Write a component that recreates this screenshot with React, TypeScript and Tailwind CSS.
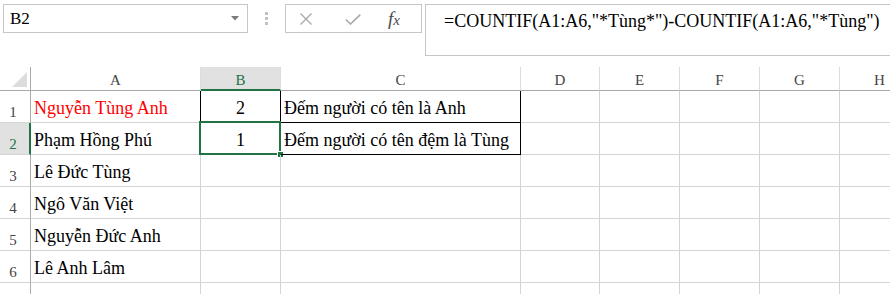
import React from 'react'

type Row = {
  n: number
  a?: string
  red?: boolean
  b?: string
  c?: string
}

const rows: Row[] = [
  { n: 1, a: 'Nguyễn Tùng Anh', red: true, b: '2', c: 'Đếm người có tên là Anh' },
  { n: 2, a: 'Phạm Hồng Phú', b: '1', c: 'Đếm người có tên đệm là Tùng' },
  { n: 3, a: 'Lê Đức Tùng' },
  { n: 4, a: 'Ngô Văn Việt' },
  { n: 5, a: 'Nguyễn Đức Anh' },
  { n: 6, a: 'Lê Anh Lâm' },
  { n: 7 },
]

const cols = ['A', 'B', 'C', 'D', 'E', 'F', 'G', 'H']

function FormulaBar() {
  return (
    <div className="flex items-start h-[67px] pt-[4px] pl-[3px]">
      <div className="w-[245px] h-[29px] border border-[#c6c6c6] flex items-center pl-[6px] pr-[8px]">
        <span className="text-[17px] leading-[20px] text-black flex-1">B2</span>
        <svg width="8" height="5" viewBox="0 0 8 5">
          <path d="M0 0 L8 0 L4 4.5 Z" fill="#7a7a7a" />
        </svg>
      </div>
      <div className="w-[37px] pl-[17px] pt-[8px] flex flex-col gap-[2px]">
        <div className="w-[3px] h-[3px] bg-[#c2c2c2]" />
        <div className="w-[3px] h-[3px] bg-[#c2c2c2]" />
        <div className="w-[3px] h-[3px] bg-[#c2c2c2]" />
      </div>
      <div className="w-[137px] h-[29px] border border-[#c6c6c6] flex items-center">
        <svg className="ml-[14px]" width="12" height="12" viewBox="0 0 12 12">
          <path d="M0.5 0.5 L11.5 11.5 M11.5 0.5 L0.5 11.5" stroke="#a8a8a8" strokeWidth="1.3" fill="none" />
        </svg>
        <svg className="ml-[33px] mt-[2px]" width="16" height="11" viewBox="0 0 16 11">
          <path d="M0.8 5.5 L5.5 10 L15.3 0.6" stroke="#a8a8a8" strokeWidth="1.6" fill="none" />
        </svg>
        <span className="ml-[27px] text-[#4a4a4a] italic leading-none">
          <span className="text-[19px]">f</span>
          <span className="text-[15px]">x</span>
        </span>
      </div>
      <div className="ml-[3px] flex-1 h-[52px] border border-r-0 border-[#c6c6c6] pl-[18px] pt-[5px]">
        <span className="text-[18px] leading-[20px] text-black whitespace-nowrap">
          =COUNTIF(A1:A6,"*Tùng*")-COUNTIF(A1:A6,"*Tùng")
        </span>
      </div>
    </div>
  )
}

function Corner() {
  return (
    <div className="border-r border-b border-r-[#a9a9a9] border-b-[#a9a9a9] flex items-end justify-end pr-[2px] pb-[2px]">
      <svg width="16" height="16" viewBox="0 0 16 16">
        <path d="M15 0 L15 15 L0 15 Z" fill="#dcdcdc" />
      </svg>
    </div>
  )
}

function ColHeader({ letter }: { letter: string }) {
  const active = letter === 'B'
  return (
    <div
      className={`flex items-end justify-center text-[15px] leading-[16px] border-r border-r-[#dcdcdc] ${
        active
          ? 'bg-[#e1e1e1] text-[#217346] border-b-2 border-b-[#217346] pb-[1px]'
          : 'text-[#444444] border-b border-b-[#a9a9a9] pb-[2px]'
      }`}
    >
      {letter}
    </div>
  )
}

function RowHeader({ n }: { n: number }) {
  const active = n === 2
  return (
    <div
      className={`flex items-end justify-center text-[15px] leading-[16px] pb-[2px] border-b border-b-[#d4d4d4] ${
        active
          ? 'bg-[#e1e1e1] text-[#217346] border-r-2 border-r-[#217346] pr-[3px]'
          : 'text-[#444444] border-r border-r-[#a9a9a9] pr-[4px]'
      }`}
    >
      {n}
    </div>
  )
}

function Cell({
  children,
  boxed,
  center,
  red,
  selected,
}: {
  children?: React.ReactNode
  boxed?: 'right' | 'both'
  center?: boolean
  red?: boolean
  selected?: boolean
}) {
  const right = boxed ? 'border-r-black' : 'border-r-[#d4d4d4]'
  const bottom = boxed === 'both' ? 'border-b-black' : 'border-b-[#d4d4d4]'
  return (
    <div
      className={`relative flex items-end border-r border-b ${right} ${bottom} pb-[4px] text-[18px] leading-[20px] whitespace-nowrap ${
        center ? 'justify-center' : 'pl-[3px]'
      } ${red ? 'text-[#ff0000]' : 'text-black'}`}
    >
      {children}
      {selected && (
        <>
          <div className="absolute -left-[2px] -top-[2px] w-[82px] h-[34px] border-2 border-[#217346]" />
          <div className="absolute left-[77px] top-[29px] w-[5px] h-[5px] bg-[#217346] outline outline-1 outline-white" />
        </>
      )}
    </div>
  )
}

export default function App() {
  return (
    <div className="w-[890px] h-[294px] overflow-hidden bg-white font-['Liberation_Serif','Times_New_Roman',serif]">
      <FormulaBar />
      <div className="grid grid-cols-[31px_170px_80px_240px_79px_80px_80px_80px_80px] grid-rows-[24px_repeat(7,32px)] w-[920px]">
        <Corner />
        {cols.map((c) => (
          <ColHeader key={c} letter={c} />
        ))}
        {rows.map((r) => {
          const inTable = r.n <= 2
          return (
            <React.Fragment key={r.n}>
              <RowHeader n={r.n} />
              <Cell red={r.red} boxed={inTable ? 'right' : undefined}>
                {r.a}
              </Cell>
              <Cell center boxed={inTable ? 'both' : undefined} selected={r.n === 2}>
                {r.b}
              </Cell>
              <Cell boxed={inTable ? 'both' : undefined}>{r.c}</Cell>
              <Cell />
              <Cell />
              <Cell />
              <Cell />
              <Cell />
            </React.Fragment>
          )
        })}
      </div>
    </div>
  )
}
